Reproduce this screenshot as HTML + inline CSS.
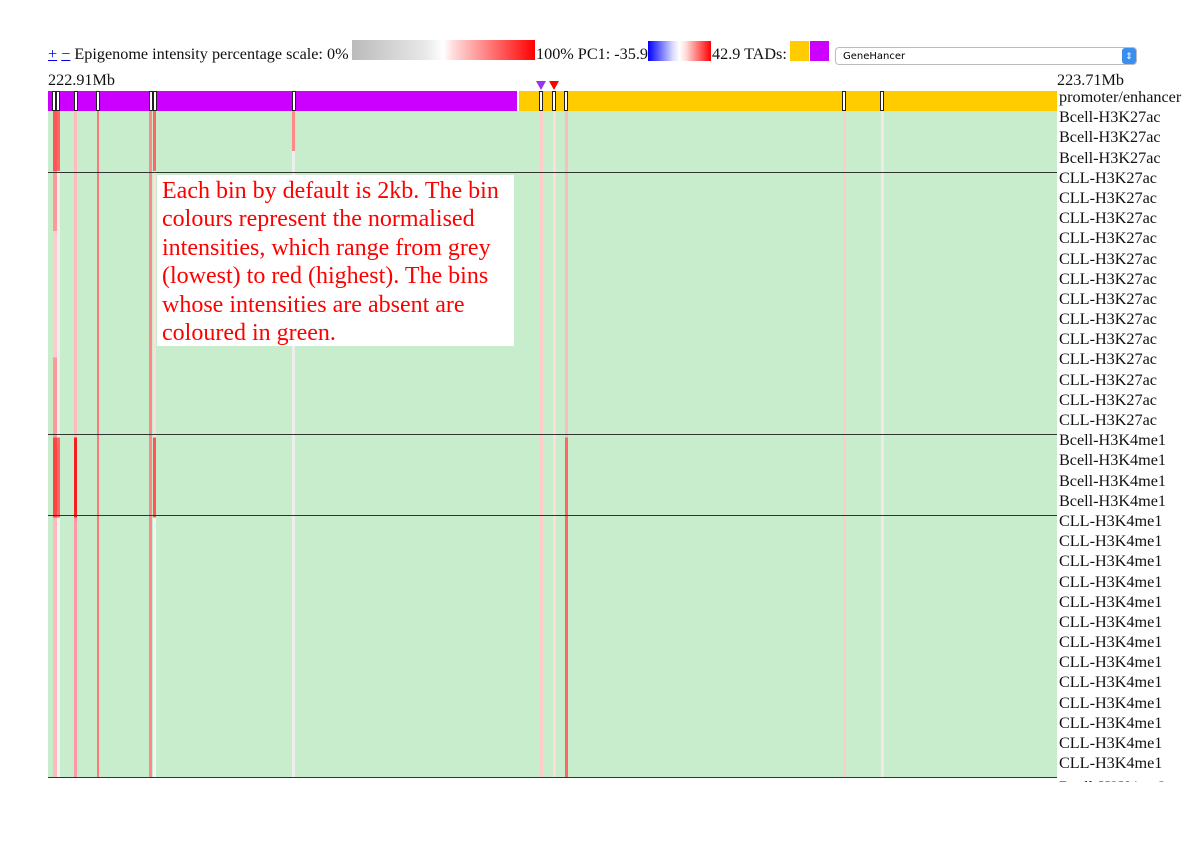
<!DOCTYPE html>
<html><head><meta charset="utf-8"><style>
body{margin:0;width:1200px;height:846px;background:#fff;position:relative;overflow:hidden;font-family:"Liberation Serif",serif;}
.a{position:absolute}
.s{position:absolute;top:111px;height:666px}
.lbl{position:absolute;left:1059px;top:87px;font-size:16.2px;line-height:20.18px;color:#111;white-space:nowrap}
.hl{position:absolute;left:48px;width:1009px;height:1px;background:#333}
.tk{position:absolute;top:91px;width:2px;height:18px;background:#fff;border:1px solid #222}
</style></head><body>
<div class="a" style="left:48px;top:45px;font-size:16.2px;color:#111;white-space:nowrap"><span style="color:#00e;text-decoration:underline">+</span> <span style="color:#00e;text-decoration:underline">−</span> Epigenome intensity percentage scale: 0%</div>
<div class="a" style="left:352px;top:40px;width:183px;height:20px;background:linear-gradient(90deg,#bbb,#e8e8e8 40%,#fff 50%,#fdd 55%,#f00)"></div>
<div class="a" style="left:536px;top:45px;font-size:16.2px;color:#111;white-space:nowrap">100% PC1: -35.9</div>
<div class="a" style="left:648px;top:41px;width:63px;height:20px;background:linear-gradient(90deg,#00f,#ddf 40%,#fff 50%,#fdd 60%,#f00)"></div>
<div class="a" style="left:712px;top:45px;font-size:16.2px;color:#111;white-space:nowrap">42.9 TADs:</div>
<div class="a" style="left:790px;top:41px;width:19px;height:20px;background:#fc0"></div>
<div class="a" style="left:810px;top:41px;width:19px;height:20px;background:#c0f"></div>
<div class="a" style="left:835px;top:47px;height:18px;border:1px solid #bbb;border-radius:4px;font-family:'DejaVu Sans',sans-serif;font-size:10px;line-height:17px;padding-left:7px;box-sizing:border-box;width:302px">GeneHancer</div>
<div class="a" style="left:1122px;top:48px;width:14px;height:16px;background:#3a8ef0;border-radius:3px;color:#fff;font-size:9px;text-align:center;line-height:16px">⇕</div>
<div class="a" style="left:48px;top:71px;font-size:16.2px;color:#111">222.91Mb</div>
<div class="a" style="left:1057px;top:71px;font-size:16.2px;color:#111">223.71Mb</div>
<div class="a" style="left:536px;top:81px;width:0;height:0;border-left:5px solid transparent;border-right:5px solid transparent;border-top:9px solid #9933ee"></div>
<div class="a" style="left:549px;top:81px;width:0;height:0;border-left:5px solid transparent;border-right:5px solid transparent;border-top:9px solid #f00"></div>
<div class="a" style="left:48px;top:91px;width:469px;height:20px;background:#c0f"></div>
<div class="a" style="left:519px;top:91px;width:538px;height:20px;background:#fc0"></div>
<div class="a" style="left:48px;top:111px;width:1009px;height:666px;background:#c8edcc"></div>
<div class="s" style="left:53px;width:4px;background:linear-gradient(#f55 0 9%,#f99 9% 18%,#fcc 18% 37%,#f99 37% 49%,#f44 49% 61%,#fbb 61% 100%)"></div>
<div class="s" style="left:57px;width:3px;background:linear-gradient(#f66 0 9%,#eee 9% 49%,#f66 49% 61%,#f3f3f3 61% 100%)"></div>
<div class="s" style="left:74px;width:3px;background:linear-gradient(#fbb 0 49%,#e22 49% 61%,#f9a 61% 100%)"></div>
<div class="s" style="left:97px;width:2px;background:#f77"></div>
<div class="s" style="left:149px;width:3px;background:#f88"></div>
<div class="s" style="left:153px;width:3px;background:linear-gradient(#f66 0 9%,#fdd 9% 49%,#f55 49% 61%,#f5f5f5 61% 100%)"></div>
<div class="s" style="left:292px;width:3px;background:linear-gradient(#f88 0 6%,#eee 6% 100%)"></div>
<div class="s" style="left:540px;width:3px;background:#fcc"></div>
<div class="s" style="left:553px;width:3px;background:#fdd"></div>
<div class="s" style="left:565px;width:3px;background:linear-gradient(#fbb 0 49%,#f66 49% 100%)"></div>
<div class="s" style="left:843px;width:3px;background:#fcc"></div>
<div class="s" style="left:881px;width:3px;background:#f2e8e8"></div>
<div class="tk" style="left:52px"></div><div class="tk" style="left:56px"></div><div class="tk" style="left:74px"></div><div class="tk" style="left:96px"></div><div class="tk" style="left:149px"></div><div class="tk" style="left:153px"></div><div class="tk" style="left:292px"></div><div class="tk" style="left:539px"></div><div class="tk" style="left:552px"></div><div class="tk" style="left:564px"></div><div class="tk" style="left:842px"></div><div class="tk" style="left:880px"></div>
<div class="hl" style="top:172px"></div>
<div class="hl" style="top:434px"></div>
<div class="hl" style="top:515px"></div>
<div class="hl" style="top:777px"></div>
<div class="a" style="left:157px;top:175px;width:357px;height:171px;background:#fff;color:#f00;font-size:24px;line-height:28.4px;padding:2px 0 0 5px;box-sizing:border-box;white-space:nowrap;overflow:hidden">Each bin by default is 2kb. The bin<br>colours represent the normalised<br>intensities, which range from grey<br>(lowest) to red (highest). The bins<br>whose intensities are absent are<br>coloured in green.</div>
<div class="lbl">promoter/enhancer<br>Bcell-H3K27ac<br>Bcell-H3K27ac<br>Bcell-H3K27ac<br>CLL-H3K27ac<br>CLL-H3K27ac<br>CLL-H3K27ac<br>CLL-H3K27ac<br>CLL-H3K27ac<br>CLL-H3K27ac<br>CLL-H3K27ac<br>CLL-H3K27ac<br>CLL-H3K27ac<br>CLL-H3K27ac<br>CLL-H3K27ac<br>CLL-H3K27ac<br>CLL-H3K27ac<br>Bcell-H3K4me1<br>Bcell-H3K4me1<br>Bcell-H3K4me1<br>Bcell-H3K4me1<br>CLL-H3K4me1<br>CLL-H3K4me1<br>CLL-H3K4me1<br>CLL-H3K4me1<br>CLL-H3K4me1<br>CLL-H3K4me1<br>CLL-H3K4me1<br>CLL-H3K4me1<br>CLL-H3K4me1<br>CLL-H3K4me1<br>CLL-H3K4me1<br>CLL-H3K4me1<br>CLL-H3K4me1</div>
<div class="a" style="left:1059px;top:779px;width:120px;height:3px;overflow:hidden;background:#fff"><div style="font-size:16.2px;line-height:16px;color:#111">Bcell-H3K4me3</div></div>
</body></html>
